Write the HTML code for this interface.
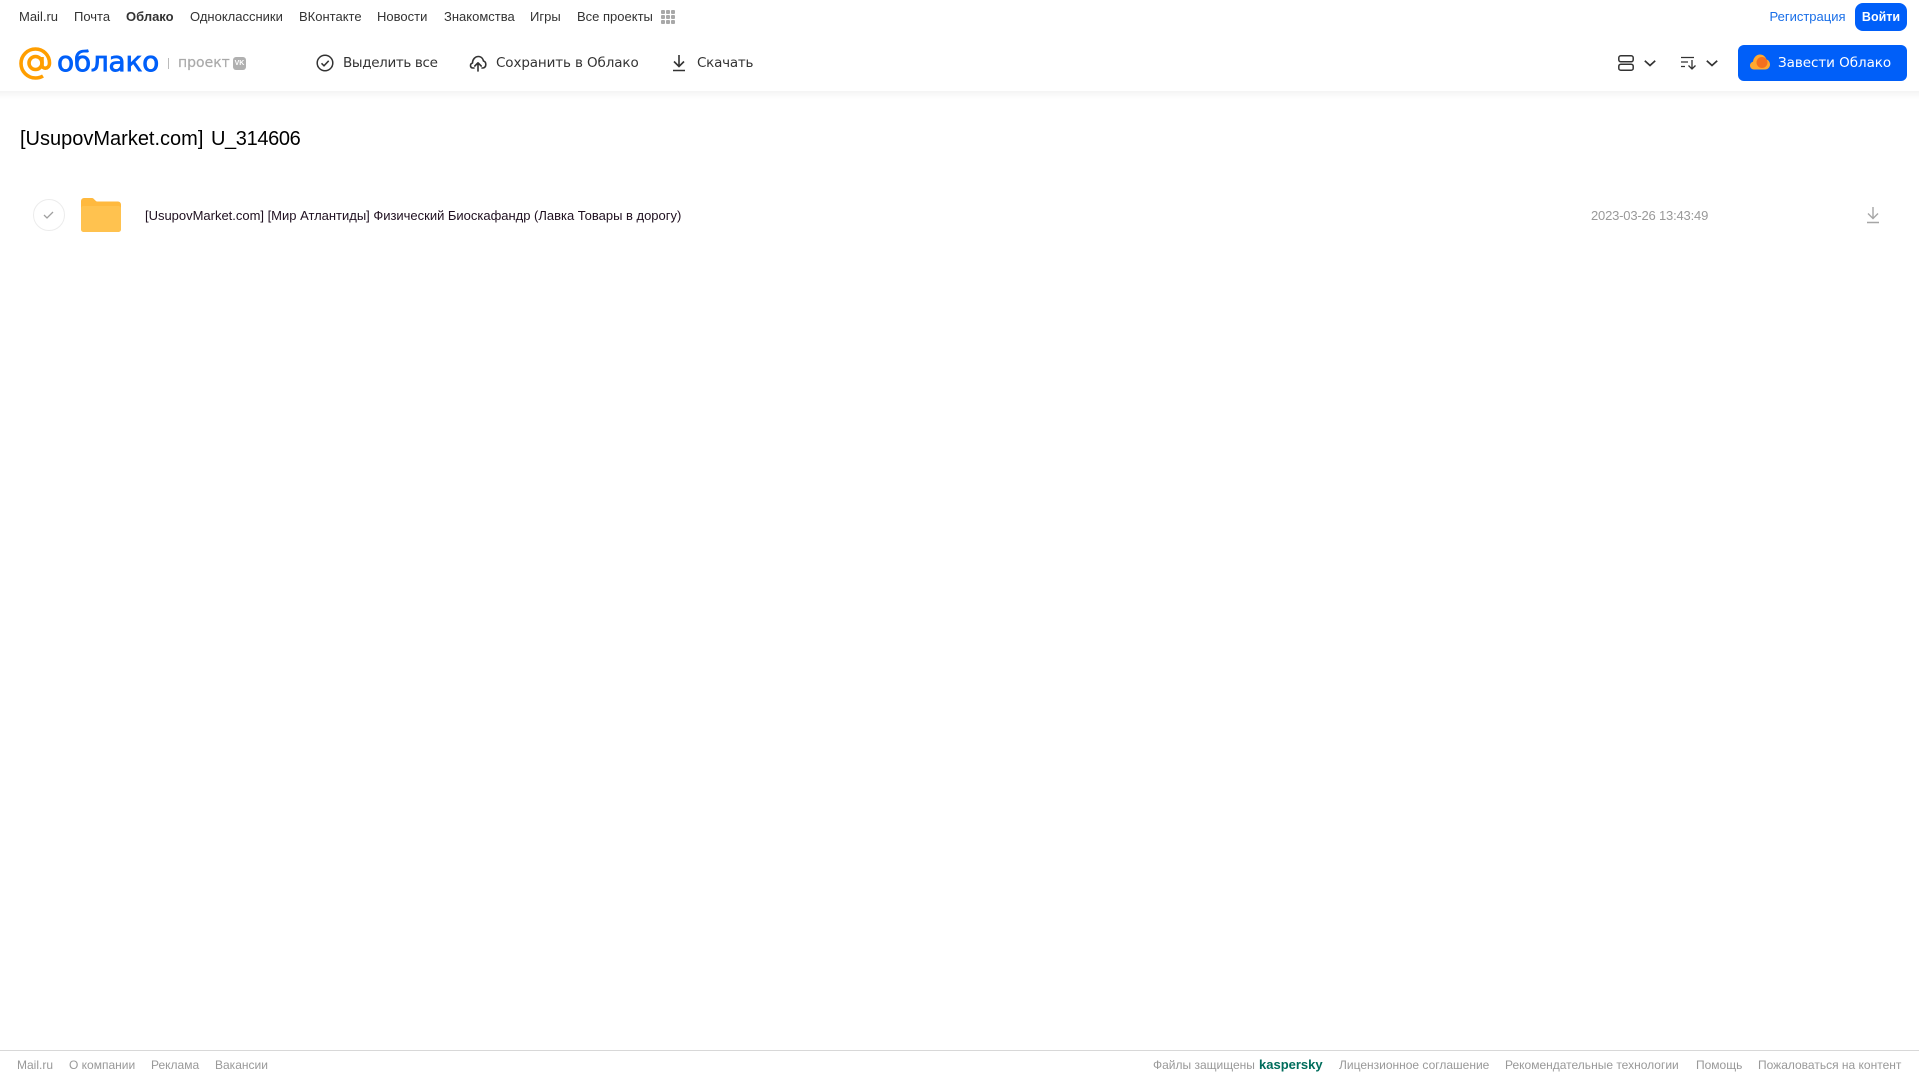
<!DOCTYPE html>
<html lang="ru"><head><meta charset="utf-8"><title>Облако</title>
<style>
html,body{margin:0;padding:0;background:#fff}
body{width:1919px;height:1079px;position:relative;overflow:hidden;font-family:"Liberation Sans",Arial,sans-serif}
.t{position:absolute;white-space:nowrap;line-height:20px;height:20px}
.n{font-size:13px;color:#333;top:7px}
.b{color:#333;top:53px;font-family:"DejaVu Sans","Liberation Sans",sans-serif;font-size:13.5px}
.f{font-size:12px;color:#999;top:1055px}
svg{position:absolute;overflow:visible}
</style></head><body>
<div style="position:absolute;left:0;top:91px;width:1919px;height:8px;background:linear-gradient(#f4f4f4,#fff)"></div>

<span class="t n" style="left:19px">Mail.ru</span>
<span class="t n" style="left:74px">Почта</span>
<span class="t n" style="left:126px;font-weight:bold">Облако</span>
<span class="t n" style="left:190px">Одноклассники</span>
<span class="t n" style="left:299px">ВКонтакте</span>
<span class="t n" style="left:377px">Новости</span>
<span class="t n" style="left:444px">Знакомства</span>
<span class="t n" style="left:530px">Игры</span>
<span class="t n" style="left:577px">Все проекты</span>
<svg style="left:661px;top:10px" width="14" height="14" fill="#a8a8a8"><rect width="4" height="4" rx="1"/><rect x="5" width="4" height="4" rx="1"/><rect x="10" width="4" height="4" rx="1"/><rect y="5" width="4" height="4" rx="1"/><rect x="5" y="5" width="4" height="4" rx="1"/><rect x="10" y="5" width="4" height="4" rx="1"/><rect y="10" width="4" height="4" rx="1"/><rect x="5" y="10" width="4" height="4" rx="1"/><rect x="10" y="10" width="4" height="4" rx="1"/></svg>
<span class="t n" style="left:1769.5px;color:#1a6fe8">Регистрация</span>
<div style="position:absolute;left:1855px;top:3px;width:52px;height:28px;border-radius:8px;background:#005ff9;color:#fff;font-size:12.5px;font-weight:bold;line-height:28px;text-align:center">Войти</div>

<svg style="left:19px;top:47px" width="33" height="33" viewBox="0 0 33 33" fill="none" stroke="#ff9e00" stroke-width="3.6"><circle cx="16.500" cy="16" r="6.500"/><path d="M23 10v8c0 4.500 7.500 4.500 7.500-2C30.500 8 24 2 16.500 2 8.500 2 2 8.500 2 16.500S8.500 31 16.500 31c3 0 5.500-.8 7.500-2"/></svg>
<span class="t" style="left:57px;top:46px;height:32px;line-height:32px;font-family:'DejaVu Sans',sans-serif;font-size:28px;color:#005ff9;letter-spacing:-.25px;-webkit-text-stroke:.8px #005ff9">облако</span>
<div style="position:absolute;left:168px;top:58px;width:1px;height:11px;background:#bbb"></div>
<span class="t" style="left:178px;top:53px;font-family:'DejaVu Sans',sans-serif;font-size:14px;color:#aaa;-webkit-text-stroke:.2px #aaa">проект</span>
<div style="position:absolute;left:233px;top:57px;width:13px;height:13px;border-radius:3px;background:#b0b0b0;color:#fff;font-size:7px;font-weight:bold;line-height:13px;text-align:center">VK</div>

<svg style="left:316px;top:54px" width="18" height="18" fill="none" stroke="#333" stroke-width="1.500"><circle cx="9" cy="9" r="7.800"/><path d="M5.500 9.300l2.500 2.500 4.700-5"/></svg>
<span class="t b" style="left:343px;letter-spacing:-.35px">Выделить все</span>
<svg style="left:469px;top:54px" width="18" height="18" fill="none" stroke="#333" stroke-width="1.600" stroke-linejoin="round" stroke-linecap="round"><path d="M5 14H4C1 14 .5 10 3.500 9 3.500 5.500 6 2.500 9.500 2.500c3 0 4.500 2.500 5 4.500 3.300 1 3 6.500-.5 7h-1"/><path d="M9 17V9M5.800 12L9 8.800 12.200 12"/></svg>
<span class="t b" style="left:496px;letter-spacing:-.12px">Сохранить в Облако</span>
<svg style="left:672px;top:54px" width="14" height="18" fill="none" stroke="#333" stroke-width="1.600"><path d="M7 1v11M2 7.500l5 5 5-5M1 16.500h12"/></svg>
<span class="t b" style="left:697px;letter-spacing:-.25px">Скачать</span>

<svg style="left:1618px;top:55px" width="16" height="16" fill="none" stroke="#333" stroke-width="1.500"><rect x=".8" y=".8" width="14.400" height="6" rx="2"/><rect x=".8" y="9.200" width="14.400" height="6" rx="2"/></svg>
<svg style="left:1644px;top:60px" width="12" height="7" fill="none" stroke="#333" stroke-width="1.700"><path d="M.8 .8L6 5.500 11.200 .8"/></svg>
<svg style="left:1681px;top:56px" width="16" height="15" fill="none" stroke="#333" stroke-width="1.300"><path d="M0 1.500h13M0 6h7M0 10.500h4M11 4v9M7.500 9.500L11 13l3.500-3.500"/></svg>
<svg style="left:1706px;top:60px" width="12" height="7" fill="none" stroke="#333" stroke-width="1.700"><path d="M.8 .8L6 5.500 11.200 .8"/></svg>
<div style="position:absolute;left:1738px;top:45px;width:169px;height:36px;border-radius:6px;background:#005ff9"></div>
<svg style="left:1750px;top:54px" width="20" height="16"><path d="M4 15.500C1.500 15.500 0 13.500 0 11.500 0 9.500 1.500 8 3 7.700 3.500 3.500 6.500 .5 10 .5c3 0 5.500 2 6.500 5 2 .5 3.500 2.500 3.500 5 0 2.700-2 5-5 5z" fill="#ffa930"/><circle cx="12" cy="8.500" r="5.500" fill="#f4701f"/></svg>
<span class="t" style="left:1778px;top:53px;color:#fff;font-family:'DejaVu Sans',sans-serif;font-size:13.500px;letter-spacing:-.05px">Завести Облако</span>

<span class="t" style="left:20px;top:126.500px;height:24px;line-height:24px;font-size:20px;color:#000;word-spacing:2px">[UsupovMarket.com] <span style="letter-spacing:-.36px">U_314606</span></span>

<div style="position:absolute;left:33px;top:199px;width:30px;height:30px;border:1px solid #ececec;border-radius:50%"></div>
<svg style="left:43px;top:210px" width="12" height="10" fill="none" stroke="#a0a0a0" stroke-width="1.300"><path d="M1 5l3 3 6-6"/></svg>
<svg style="left:81px;top:198px" width="40" height="34"><path d="M0 3a3 3 0 0 1 3-3h8c2 0 3 3 5 3.500H37a3 3 0 0 1 3 3V31a3 3 0 0 1-3 3H3a3 3 0 0 1-3-3z" fill="#ffb93e"/><rect y="8" width="40" height="26" rx="2.500" fill="#ffc24f"/></svg>
<span class="t" style="left:145px;top:206px;font-size:13px;color:#1f1020;letter-spacing:-.012px">[UsupovMarket.com] [Мир Атлантиды] Физический Биоскафандр (Лавка Товары в дорогу)</span>
<span class="t" style="left:1591px;top:206px;font-size:13px;color:#999;letter-spacing:-.19px">2023-03-26 13:43:49</span>
<svg style="left:1866px;top:207px" width="14" height="17" fill="none" stroke="#a6a6a6" stroke-width="1.400"><path d="M7 0v11M2 6.500l5 5 5-5M1 15.500h12"/></svg>

<div style="position:absolute;left:0;top:1050px;width:1919px;height:1px;background:#d8d8d8"></div>
<span class="t f" style="left:17px">Mail.ru</span>
<span class="t f" style="left:69px">О компании</span>
<span class="t f" style="left:151px">Реклама</span>
<span class="t f" style="left:215px">Вакансии</span>
<span class="t f" style="left:1153px">Файлы защищены</span>
<span class="t f" style="left:1259px;color:#006d5c;font-weight:bold;font-size:13px">kaspersky</span>
<span class="t f" style="left:1339px">Лицензионное соглашение</span>
<span class="t f" style="left:1505px">Рекомендательные технологии</span>
<span class="t f" style="left:1696px">Помощь</span>
<span class="t f" style="left:1758px">Пожаловаться на контент</span>
</body></html>
